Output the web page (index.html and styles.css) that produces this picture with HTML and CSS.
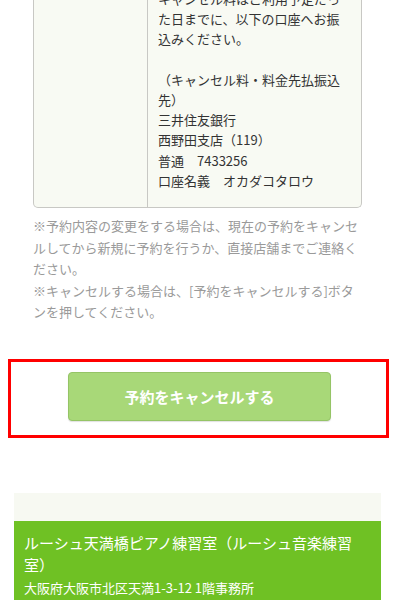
FILE: index.html
```html
<!DOCTYPE html>
<html lang="ja">
<head>
    <meta charset="UTF-8">
    <meta name="viewport" content="width=device-width, initial-scale=1.0">
    <title>予約の確認</title>
    <link rel="stylesheet" href="styles.css">
</head>
<body>
    <div class="page">
        <table class="detail">
            <tr>
                <th></th>
                <td>
                    キャンセル料はご利用予定だった日までに、以下の口座へお振込みください。<br>
                    <br>
                    （キャンセル料・料金先払振込先）<br>
                    三井住友銀行<br>
                    西野田支店（119）<br>
                    普通　7433256<br>
                    口座名義　オカダコタロウ
                </td>
            </tr>
        </table>

        <p class="note">
            ※予約内容の変更をする場合は、現在の予約をキャンセルしてから新規に予約を行うか、直接店舗までご連絡ください。<br>
            ※キャンセルする場合は、[予約をキャンセルする]ボタンを押してください。
        </p>

        <div class="cancel-area">
            <button class="cancel-btn">予約をキャンセルする</button>
        </div>
    </div>

    <footer class="shop">
        <div class="shop-top"></div>
        <div class="shop-info">
            <div class="shop-name">ルーシュ天満橋ピアノ練習室（ルーシュ音楽練習室）</div>
            <div class="shop-address">大阪府大阪市北区天満1-3-12 1階事務所</div>
        </div>
    </footer>
</body>
</html>
```

FILE: styles.css
```css
body {
    font-family: "Noto Sans CJK JP", "Noto Sans", sans-serif;
    margin: 0;
    background-color: #fff;
    color: #333;
}

.page {
    margin-top: -11px;
    padding: 0 38px 0 33px;
}

.detail {
    width: 329px;
    border-collapse: separate;
    border-spacing: 0;
    background-color: #f8faf3;
    border: 1px solid #c8c8c4;
    border-top: none;
    border-radius: 0 0 5px 5px;
    font-size: 13px;
    line-height: 20.2px;
}

.detail th {
    width: 113px;
    border-right: 1px solid #c8c8c4;
    padding: 0;
}

.detail td {
    padding: 0 20px 16px 10px;
    text-align: left;
    vertical-align: top;
}

.note {
    margin: 7px 0 0;
    font-size: 13px;
    line-height: 21.5px;
    color: #9a9a9a;
}

.cancel-area {
    margin: 36px 0 0 -25px;
    width: 375px;
    height: 63px;
    padding-top: 10px;
    border: 3px solid #f00;
    display: flex;
    align-items: flex-start;
    justify-content: center;
}

.cancel-btn {
    width: 263px;
    height: 49px;
    margin-left: 2px;
    font-family: inherit;
    font-size: 15px;
    font-weight: bold;
    color: #fff;
    background-color: #a8d878;
    border: 1px solid #95c466;
    border-radius: 4px;
    box-shadow: 0 1px 1px rgba(0, 0, 0, 0.12);
    cursor: pointer;
}

.shop {
    margin: 55px 19px 0 14px;
}

.shop-top {
    height: 28px;
    background-color: #f7f9f2;
}

.shop-info {
    background-color: #6fc124;
    color: #fff;
    padding: 11px 10px 8px;
}

.shop-name {
    font-size: 15px;
    line-height: 22px;
}

.shop-address {
    font-size: 13px;
    line-height: 23px;
}
```
